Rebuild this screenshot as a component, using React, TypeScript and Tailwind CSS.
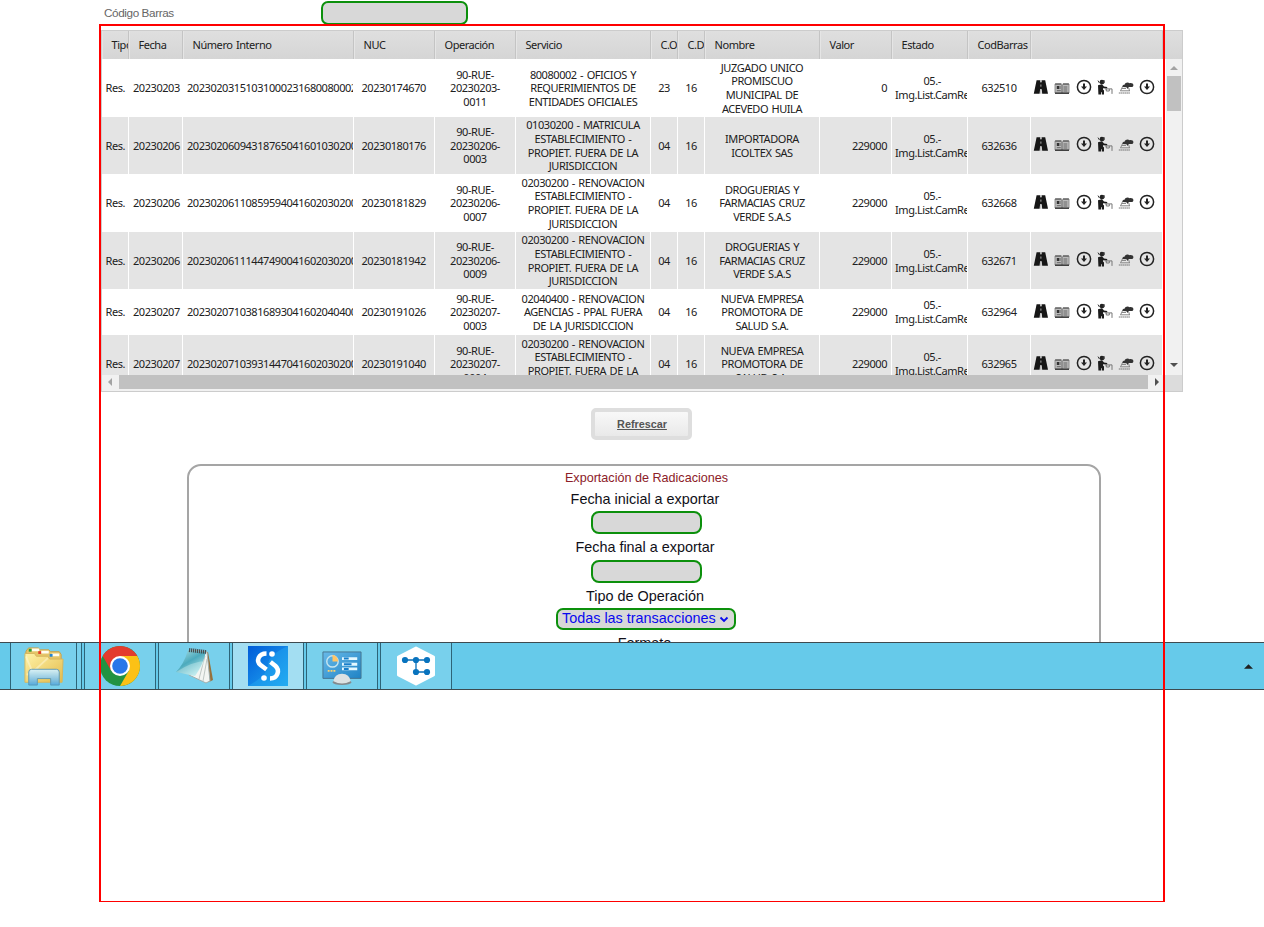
import type { ReactNode } from "react";

type Row = {
  fecha: string;
  interno: string;
  nuc: string;
  op: string[];
  servicio: string[];
  co: string;
  nombre: string[];
  valor: string;
  cod: string;
  height: string;
};

const rows: Row[] = [
  { fecha: "20230203", interno: "20230203151031000231680080002", nuc: "20230174670", op: ["90-RUE-", "20230203-", "0011"], servicio: ["80080002 - OFICIOS Y", "REQUERIMIENTOS DE", "ENTIDADES OFICIALES"], co: "23", nombre: ["JUZGADO UNICO", "PROMISCUO", "MUNICIPAL DE", "ACEVEDO HUILA"], valor: "0", cod: "632510", height: "h-[58px]" },
  { fecha: "20230206", interno: "20230206094318765041601030200", nuc: "20230180176", op: ["90-RUE-", "20230206-", "0003"], servicio: ["01030200 - MATRICULA", "ESTABLECIMIENTO -", "PROPIET. FUERA DE LA", "JURISDICCION"], co: "04", nombre: ["IMPORTADORA", "ICOLTEX SAS"], valor: "229000", cod: "632636", height: "h-[57px]" },
  { fecha: "20230206", interno: "20230206110859594041602030200", nuc: "20230181829", op: ["90-RUE-", "20230206-", "0007"], servicio: ["02030200 - RENOVACION", "ESTABLECIMIENTO -", "PROPIET. FUERA DE LA", "JURISDICCION"], co: "04", nombre: ["DROGUERIAS Y", "FARMACIAS CRUZ", "VERDE S.A.S"], valor: "229000", cod: "632668", height: "h-[58px]" },
  { fecha: "20230206", interno: "20230206111447490041602030200", nuc: "20230181942", op: ["90-RUE-", "20230206-", "0009"], servicio: ["02030200 - RENOVACION", "ESTABLECIMIENTO -", "PROPIET. FUERA DE LA", "JURISDICCION"], co: "04", nombre: ["DROGUERIAS Y", "FARMACIAS CRUZ", "VERDE S.A.S"], valor: "229000", cod: "632671", height: "h-[57px]" },
  { fecha: "20230207", interno: "20230207103816893041602040400", nuc: "20230191026", op: ["90-RUE-", "20230207-", "0003"], servicio: ["02040400 - RENOVACION", "AGENCIAS - PPAL FUERA", "DE LA JURISDICCION"], co: "04", nombre: ["NUEVA EMPRESA", "PROMOTORA DE", "SALUD S.A."], valor: "229000", cod: "632964", height: "h-[46px]" },
  { fecha: "20230207", interno: "20230207103931447041602030200", nuc: "20230191040", op: ["90-RUE-", "20230207-", "0004"], servicio: ["02030200 - RENOVACION", "ESTABLECIMIENTO -", "PROPIET. FUERA DE LA", "JURISDICCION"], co: "04", nombre: ["NUEVA EMPRESA", "PROMOTORA DE", "SALUD S.A."], valor: "229000", cod: "632965", height: "h-[58px]" },
];

const headers = ["Tipo", "Fecha", "Número Interno", "NUC", "Operación", "Servicio", "C.O", "C.D", "Nombre", "Valor", "Estado", "CodBarras", ""];
const columns = "grid grid-cols-[27px_54px_171px_81px_81px_135px_27px_27px_115px_72px_76px_63px_132px]";

function Cell({ children, className = "justify-center text-center", odd }: { children: ReactNode; className?: string; odd: boolean }) {
  return (
    <div className={`flex min-w-0 items-center overflow-hidden border-r whitespace-nowrap ${odd ? "border-white" : "border-transparent"} ${className}`}>
      {children}
    </div>
  );
}

function Lines({ text }: { text: string[] }) {
  return <div>{text.map((t) => <div key={t}>{t}</div>)}</div>;
}

function DownIcon() {
  return (
    <svg viewBox="0 0 16 16" className="h-4 w-4 shrink-0">
      <circle cx="8" cy="8" r="6.6" fill="none" stroke="#222" strokeWidth="1.5" />
      <path d="M8 4.6v4" stroke="#222" strokeWidth="2" />
      <path d="M5 7.6h6L8 11z" fill="#222" />
    </svg>
  );
}

function Actions() {
  return (
    <div className="flex gap-[5.3px] pb-[3px] pl-[2px]">
      <svg viewBox="0 0 16 16" className="h-4 w-4 shrink-0">
        <path d="M3.6 1.2h3.6v2h1.4v-2h3.6L15 14.8H9.2l-.5-4.6H7.1l-.5 4.6H.8z" fill="#161616" />
        <path d="M7.9 1.2v2M7.9 5.5v2.2M7.9 11v3.8" stroke="#aaa" strokeWidth="1" />
      </svg>
      <svg viewBox="0 0 16 16" className="h-4 w-4 shrink-0">
        <path d="M1 5h6.3L8 5.7 8.7 5H15v9H1z" fill="#bbb" stroke="#888" strokeWidth=".9" />
        <path d="M1.2 5h6M9 5h5.8" stroke="#444" fill="none" strokeWidth="1.2" />
        <path d="M2.8 7h2.4v3H2.8z" fill="#333" />
        <path d="M6 7v3M2.8 11.7h4M9.5 8h3.8M9.5 10h3.8M9.5 12h3.8M8 6v8" stroke="#666" strokeWidth="1" />
        <path d="M1 14.2h14" stroke="#222" strokeWidth="1.2" />
      </svg>
      <DownIcon />
      <svg viewBox="0 0 16 16" className="h-4 w-4 shrink-0">
        <circle cx="4.9" cy="3.1" r="2.3" fill="#222" />
        <path d="M5.5 1.2h2.2v2.5L6 5.2z" fill="#333" />
        <path d="M1 6.2l4-.9 2 2.2 3.2.6v1.4L6 9.2v1.2l1 1.2v4H4.9v-2.3h-.8v2.3H1.4z" fill="#1c1c1c" />
        <path d="M1 1.6l1.5 2.5" stroke="#333" fill="none" />
        <path d="M8 9.9h7v5M9.3 10v2h3v-2" stroke="#777" fill="none" />
      </svg>
      <svg viewBox="0 0 16 16" className="h-4 w-4 shrink-0">
        <path d="M4.2 8c0-1.9 1.3-2.3 2.3-2.3.7-2.2 3.5-3 5-1.5 2.4-.4 3.9.6 3.9 2.1 0 1.3-1 1.8-2.2 1.8h-2.4L9.8 10 8.4 8.2z" fill="#333" />
        <path d="M4.5 7.7L2.6 11.8M10.8 9l.7 3M2.2 11.8H12M4 9.5h4" stroke="#888" fill="none" />
        <path d="M.8 14h11.4" stroke="#777" strokeDasharray="1.6 .3" />
      </svg>
      <DownIcon />
    </div>
  );
}

function Arrow({ d, color }: { d: string; color: string }) {
  return <svg viewBox="0 0 8 8" className="h-2 w-2"><path d={d} fill={color} /></svg>;
}

function Grid() {
  return (
    <div className="ml-[101px] h-[362px] w-[1082px] border border-[#ccc] bg-white font-['Noto_Sans','Open_Sans',sans-serif] text-[11px] leading-[13.6px] tracking-[-0.44px] text-[#202020] [word-spacing:1px]">
      <div className={`${columns} h-[28px] bg-linear-to-b from-[#dfdfdf] to-[#d5d5d5]`}>
        {headers.map((h, i) => (
          <div key={i} className="flex items-center overflow-hidden border-r border-[#c4c4c4] pl-[9.5px] whitespace-nowrap shadow-[inset_1px_0_0_#e5e5e5]">{h}</div>
        ))}
      </div>
      <div className="flex h-[316px]">
        <div className="h-full w-[1061px] shrink-0 overflow-hidden">
          {rows.map((r, i) => {
            const odd = i % 2 === 1;
            return (
              <div key={i} className={`${columns} ${r.height} ${odd ? "bg-[#e4e4e4]" : "bg-white"}`}>
                <Cell odd={odd} className="pl-[3.5px]">Res.</Cell>
                <Cell odd={odd} className="pl-1">{r.fecha}</Cell>
                <Cell odd={odd} className="pl-1">{r.interno}</Cell>
                <Cell odd={odd} className="pl-[7.5px]">{r.nuc}</Cell>
                <Cell odd={odd}><Lines text={r.op} /></Cell>
                <Cell odd={odd}><Lines text={r.servicio} /></Cell>
                <Cell odd={odd}>{r.co}</Cell>
                <Cell odd={odd}>16</Cell>
                <Cell odd={odd}><Lines text={r.nombre} /></Cell>
                <Cell odd={odd} className="justify-end pr-1">{r.valor}</Cell>
                <Cell odd={odd} className="pl-[3px] text-center"><Lines text={["05.-", "Img.List.CamRe"]} /></Cell>
                <Cell odd={odd}>{r.cod}</Cell>
                <Cell odd={odd} className=""><Actions /></Cell>
              </div>
            );
          })}
        </div>
        <div className="ml-[3px] flex w-4 flex-col items-center bg-[#f1f1f1] pt-[5px] pb-[6px]">
          <Arrow d="M0 6h8L4 2z" color="#a3a3a3" />
          <div className="mt-[4px] h-[35px] w-[14px] shrink-0 bg-[#c1c1c1]" />
          <div className="grow" />
          <Arrow d="M0 2h8L4 6z" color="#505050" />
        </div>
      </div>
      <div className="flex h-4 bg-[#dcdcdc]">
        <div className="flex w-[1062px] items-center bg-[#f1f1f1] pb-[2px] pr-[2px] pl-[4px]">
          <Arrow d="M6 0v8L2 4z" color="#a3a3a3" />
          <div className="ml-[5px] h-[14px] w-[1029px] bg-[#c1c1c1]" />
          <div className="ml-[5px]"><Arrow d="M2 0v8l4-4z" color="#505050" /></div>
        </div>
      </div>
    </div>
  );
}

function TaskButton({ children, className = "w-[72px] bg-[#78d0ec]" }: { children?: ReactNode; className?: string }) {
  return <div className={`flex h-full shrink-0 items-center justify-center border-x border-[#2d6478] ${className}`}>{children}</div>;
}

function Taskbar() {
  return (
    <div className="flex h-[48px] w-full items-center border-y border-[#3d4a50] bg-[#66caea] pl-[10px]">
      <TaskButton className="w-[67px] bg-[#78d0ec]">
        <svg viewBox="0 0 42 42" className="h-[39px] w-[40px]" preserveAspectRatio="none">
          <defs>
            <linearGradient id="folder" x2="1" y2="1"><stop stopColor="#fff3a8" /><stop offset="1" stopColor="#e3bb4b" /></linearGradient>
            <linearGradient id="stand" x2="0" y2="1"><stop stopColor="#d9f3fa" /><stop offset="1" stopColor="#55a9dc" /></linearGradient>
          </defs>
          <path d="M3 3l2-2h10l2 2h9l2 2h9l2 3v25H2V5z" fill="#e5c568" stroke="#c9a04a" />
          <path d="M8 3h8M18 5.5h8M29 8.5h8" stroke="#fffdf0" strokeWidth="3" />
          <path d="M5 3.5h3" stroke="#2a9e38" strokeWidth="3" /><path d="M15 6h3" stroke="#e23b28" strokeWidth="3" /><path d="M27 9h3" stroke="#2585d1" strokeWidth="3" />
          <path d="M1 7h10l2 3h12l2 3h14l-1 25H1z" fill="url(#folder)" stroke="#d5b65e" />
          <path d="M2 10l7 17L25 12M3 30l12-8" stroke="#fffbe0" opacity=".45" fill="none" strokeWidth="2" />
          <path d="M5 41V27q0-3 3-3h26q3 0 3 3v14h-9v-7H14v7z" fill="url(#stand)" stroke="#5796b8" opacity=".95" />
        </svg>
      </TaskButton>
      <div className="mr-[2px] h-full w-[5px] border-r border-[#2d6478] bg-[#78d0ec]" />
      <TaskButton>
        <svg viewBox="0 0 40 40" className="h-10 w-10">
          <circle cx="20" cy="20" r="20" fill="#229342" />
          <path d="M20 20L2.68 10A20 20 0 0 1 37.32 10H20z" fill="#e33b2e" />
          <path d="M37.32 10A20 20 0 0 1 20 40l8.66-15L20 10z" fill="#fbc116" />
          <path d="M2.68 10L11.34 25 20 10z" fill="#e33b2e" />
          <circle cx="20" cy="20" r="10" fill="#fff" /><circle cx="20" cy="20" r="7.8" fill="#2876e9" />
        </svg>
      </TaskButton>
      <div className="w-[2px]" />
      <TaskButton>
        <svg viewBox="0 0 40 40" className="h-10 w-10">
          <defs><linearGradient id="note" x2=".7" y2="1"><stop stopColor="#b5e5e8" /><stop offset=".5" stopColor="#4caabd" /><stop offset="1" stopColor="#c2eff0" /></linearGradient></defs>
          <path d="M17 4l17 2 5 28-4 2-10-3z" fill="#96713c" />
          <path d="M17 4l16 2 3 29-4 2-17-8z" fill="#f3f5f2" stroke="#a0afae" />
          <path d="M31 10L25 33M33 13l-4 22" stroke="#bfc7c4" />
          <path d="M14 4l18 2q-3 13-11 24L2 26Q10 18 14 4z" fill="url(#note)" />
          <path d="M2 26l19 4 11-15Q19 15 2 26z" fill="#dcf6f6" opacity=".35" />
          <path d="M15 4l17 2" stroke="#454e50" strokeWidth="4" strokeDasharray="1.2 .8" />
        </svg>
      </TaskButton>
      <div className="w-[2px]" />
      <TaskButton className="w-[72px] bg-[#a3def2]">
        <svg viewBox="0 0 40 40" className="h-10 w-10">
          <defs><linearGradient id="app" x2="1" y2="1"><stop stopColor="#005bd8" /><stop offset="1" stopColor="#22aaf2" /></linearGradient></defs>
          <path fill="url(#app)" d="M0 0h40v40H0z" /><path d="M40 0v40H0Q20 29 20 19T40 0z" fill="#28aef3" opacity=".4" />
          <path d="M18.5 7.5C10 7.5 8 15.5 12.5 19L18.5 23.5M22.5 16L27.5 20C32 24 30 32.5 22 32.5" fill="none" stroke="#fff" strokeWidth="4.5" />
          <circle cx="24" cy="8" r="2.8" fill="#fff" /><circle cx="16" cy="32" r="2.8" fill="#fff" />
        </svg>
      </TaskButton>
      <div className="w-[2px]" />
      <TaskButton>
        <svg viewBox="0 0 42 36" className="mt-1 h-[34px] w-[40px]" preserveAspectRatio="none">
          <defs><linearGradient id="panel" x2="1" y2="1"><stop stopColor="#68b9e8" /><stop offset="1" stopColor="#1f83c5" /></linearGradient></defs>
          <path d="M1 1h40v28H1z" fill="url(#panel)" stroke="#46748f" />
          <circle cx="11" cy="11" r="6" fill="none" stroke="#c7e5ef" strokeWidth="1.5" /><path d="M11 11V4a7 7 0 0 1 6 7z" fill="#ffc568" />
          <path d="M21 8h16M21 14h16M21 19h16" stroke="#e4f8ff" strokeWidth="3" /><path d="M23 8h5M23 14h8M23 19h5" stroke="#187eca" strokeWidth="2" />
          <path d="M6 21h9" stroke="#ffd46b" strokeWidth="2" strokeDasharray="2 1" />
          <ellipse cx="21" cy="33" rx="10" ry="3" fill="#838a8d" /><path d="M12 32q1-8 9-8t9 8q-9 5-18 0" fill="#dce2e3" />
        </svg>
      </TaskButton>
      <div className="w-[2px]" />
      <TaskButton>
        <svg viewBox="0 0 40 40" className="h-10 w-10">
          <path d="M20 2L37.5 11v18L20 38 2.500 29V11z" fill="#fff" stroke="#fff" strokeWidth="3" strokeLinejoin="round" />
          <path d="M9 14h22M20 14v12h11" stroke="#086fb8" strokeWidth="1.3" fill="none" />
          <g fill="#0873be"><circle cx="9" cy="14" r="3.1" /><circle cx="20" cy="14" r="3.1" /><circle cx="31" cy="14" r="3.1" /><circle cx="20" cy="26" r="3.1" /><circle cx="31" cy="26" r="3.1" /></g>
        </svg>
      </TaskButton>
      <svg viewBox="0 0 10 5" className="mr-[11px] ml-auto h-[5px] w-[9px]"><path d="M5 0l5 5H0z" fill="#202020" /></svg>
    </div>
  );
}

export default function App() {
  return (
    <main className="relative h-[927px] w-[1264px] overflow-hidden bg-white font-['Liberation_Sans',Arial,sans-serif]">
      <section className="h-[642px] overflow-hidden">
        <div className="flex h-[30px] pl-[104px]">
          <label className="w-[217px] pt-[5px] text-[11.7px] leading-4 tracking-[-0.38px] text-[#666]">Código Barras</label>
          <div className="mt-px h-[24px] w-[147px] rounded-[7px] border-2 border-[#0c900c] bg-[#d8d8d8]" />
        </div>
        <Grid />
        <button className="mt-[16px] ml-[591px] block h-[32px] w-[101px] rounded-[5px] border-4 border-[#dedede] bg-linear-to-b from-[#f8f8f8] to-[#e9e9e9] pl-px text-[10.8px] font-bold text-[#555] underline">Refrescar</button>
        <section className="mt-[24px] ml-[187px] flex h-[220px] w-[914px] flex-col items-center rounded-[14px] border-2 border-[#a5a5a5] text-[#101018]">
          <div className="mt-[2px] h-[20px] pl-[5px] text-[12.6px] leading-5 text-[#8c2028]">Exportación de Radicaciones</div>
          <div className="mt-[2px] h-[18px] pl-[2px] text-[14.4px] leading-[18px]">Fecha inicial a exportar</div>
          <div className="mt-[3px] ml-[5px] h-[23px] w-[111px] rounded-[8px] border-2 border-[#0c900c] bg-[#d8d8d8]" />
          <div className="mt-[4px] h-[18px] pl-[2px] text-[14.4px] leading-[18px]">Fecha final a exportar</div>
          <div className="mt-[4px] ml-[5px] h-[23px] w-[111px] rounded-[8px] border-2 border-[#0c900c] bg-[#d8d8d8]" />
          <div className="mt-[4px] h-[18px] pl-[2px] text-[14.4px] leading-[18px]">Tipo de Operación</div>
          <div className="mt-[3px] ml-[4px] flex h-[22px] w-[180px] items-center rounded-[7px] border-2 border-[#0c900c] bg-[#d8d8d8] pl-1 text-[14.4px] whitespace-nowrap text-[#0909ef]">
            Todas las transacciones
            <svg viewBox="0 0 10 7" className="mr-[5px] ml-auto h-[7px] w-[10px]"><path d="M1.500 1.500L5 5l3.500-3.500" fill="none" stroke="#0909ef" strokeWidth="1.8" /></svg>
          </div>
          <div className="mt-[4px] pl-[1px] text-[14.4px] leading-[18px]">Formato</div>
        </section>
      </section>
      <Taskbar />
      <div className="pointer-events-none absolute top-[24px] left-[99px] h-[878px] w-[1066px] border-2 border-b border-[#ff0000]" />
    </main>
  );
}
